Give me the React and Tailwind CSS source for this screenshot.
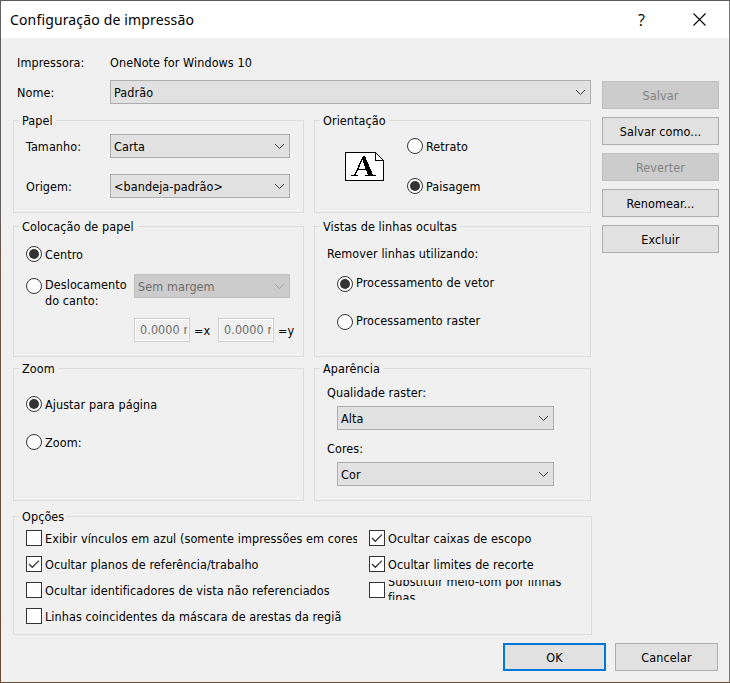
import React from "react";

function Group({ title, className = "", children }) {
  return (
    <section className={"border border-[#dcdcdc] " + className}>
      <div className="flex h-0 items-center pl-[5px]">
        <span className="bg-[#f0f0f0] px-[3px] leading-4">{title}</span>
      </div>
      {children}
    </section>
  );
}

function Select({ value, disabled, className = "" }) {
  return (
    <div
      className={
        "flex h-6 shrink-0 items-center justify-between border pl-[3px] pr-1 " +
        (disabled ? "border-[#bfbfbf] bg-[#cccccc] text-[#6d6d6d] " : "border-[#adadad] bg-[#e1e1e1] ") +
        className
      }
    >
      <span className="pt-px">{value}</span>
      <svg width="11" height="7" viewBox="0 0 11 7" fill="none" stroke={disabled ? "#a3a3a3" : "#404040"} strokeWidth="1">
        <path d="M1 1L5.5 5.5L10 1" />
      </svg>
    </div>
  );
}

function Radio({ checked }) {
  return (
    <svg className="shrink-0" width="16" height="16" viewBox="0 0 16 16">
      <circle cx="8" cy="8" r="7.5" fill="#fff" stroke="#333" strokeWidth="1" />
      {checked && <circle cx="8" cy="8" r="5" fill="#333" />}
    </svg>
  );
}

function Check({ checked }) {
  return (
    <svg className="shrink-0" width="16" height="16" viewBox="0 0 16 16">
      <rect x="0.5" y="0.5" width="15" height="15" fill="#fff" stroke="#333" />
      {checked && <path d="M3 8L6.3 11.3L13 4.6" fill="none" stroke="#333" strokeWidth="1.3" />}
    </svg>
  );
}

function Option({ control, label, className = "", labelClass = "mt-px" }) {
  return (
    <div className={"flex h-4 items-start gap-[3px] " + className}>
      {control}
      <span className={labelClass}>{label}</span>
    </div>
  );
}

function Button({ label, disabled, className = "" }) {
  return (
    <button
      className={
        "flex h-7 items-center justify-center pt-px " +
        (disabled ? "border border-[#bfbfbf] bg-[#cccccc] text-[#838383] " : "bg-[#e1e1e1] ") +
        className
      }
    >
      {label}
    </button>
  );
}

function Offset({ value }) {
  return (
    <span className="flex h-6 w-14 items-center border border-[#cccccc] bg-[#f0f0f0] pl-[5px] text-[#6d6d6d] shadow-[inset_0_0_0_1px_#fff]">
      <span className="w-[47px] overflow-hidden">{value}</span>
    </span>
  );
}

export default function App() {
  return (
    <div className="h-[683px] w-[730px] bg-[linear-gradient(to_bottom,#636063_0,#636063_200px,#6b5547_260px,#6b4a36_683px)] pb-px pl-px">
      <div className="flex h-[682px] w-[729px] flex-col overflow-hidden whitespace-nowrap border-r border-t border-r-[#777777] border-t-[#5b575a] bg-[#f0f0f0] font-['DejaVu_Sans_Condensed','DejaVu_Sans',sans-serif] text-[12.5px] leading-4 tracking-[0.08px] text-black [font-stretch:condensed]">
        <header className="flex h-[37px] shrink-0 items-center bg-white pl-[9px] pr-[23px]">
          <h1 className="flex-1 font-['Noto_Sans',sans-serif] text-[14px] tracking-[0.15px] [font-stretch:normal]">Configuração de impressão</h1>
          <span className="mr-[48px] font-['Open_Sans',sans-serif] text-[16px] [font-stretch:normal]">?</span>
          <svg width="13" height="13" viewBox="0 0 13 13" stroke="#000" strokeWidth="1.1">
            <path d="M0.5 0.5L12.5 12.5M12.5 0.5L0.5 12.5" />
          </svg>
        </header>

        <main className="flex h-[597px] shrink-0 pl-3">
          <div className="flex w-[579px] flex-col">
            <div className="mt-[17px] flex h-4 items-center pl-1">
              <span className="w-[93px]">Impressora:</span>
              <span>OneNote for Windows 10</span>
            </div>
            <div className="mt-[9px] flex h-6 items-center pl-1">
              <span className="w-[93px] pt-px">Nome:</span>
              <Select value="Padrão" className="w-[481px]" />
            </div>

            <div className="mt-4 flex gap-[10px]">
              <Group title="Papel" className="h-[93px] w-[291px]">
                <div className="mt-[13px] flex h-6 items-center pl-3">
                  <span className="w-[84px] pt-px">Tamanho:</span>
                  <Select value="Carta" className="w-[180px]" />
                </div>
                <div className="mt-4 flex h-6 items-center pl-3">
                  <span className="w-[84px] pt-px">Origem:</span>
                  <Select value="<bandeja-padrão>" className="w-[180px]" />
                </div>
              </Group>
              <Group title="Orientação" className="h-[93px] w-[277px]">
                <div className="flex pl-[30px]">
                  <svg className="mt-[31px]" width="39" height="29" viewBox="0 0 39 29" shapeRendering="crispEdges">
                    <path d="M.5.5H30.5L38.5 8.5V28.5H.5Z" fill="#fff" stroke="#000" />
                    <path d="M30.5 .5V8.5H38.5" fill="none" stroke="#000" />
                    <path
                      d="M18 4H20L28 23H31V24H20V23H23L21 18H13L10.500 23H13V24H6V23H9ZM17.500 8L13.500 17H20.500Z"
                      fill="#000"
                      fillRule="evenodd"
                    />
                  </svg>
                  <div className="ml-[23px] mt-[17px] flex flex-col gap-6">
                    <Option control={<Radio />} label="Retrato" />
                    <Option control={<Radio checked />} label="Paisagem" />
                  </div>
                </div>
              </Group>
            </div>

            <div className="mt-[13px] flex gap-[10px]">
              <Group title="Colocação de papel" className="h-[131px] w-[291px]">
                <Option className="mt-[19px] pl-3" control={<Radio checked />} label="Centro" />
                <div className="mt-3 flex h-6 items-center pl-3">
                  <Radio />
                  <span className="ml-[3px] mt-[14px] w-[89px] leading-4">
                    Deslocamento
                    <br />
                    do canto:
                  </span>
                  <Select value="Sem margem" disabled className="w-[156px]" />
                </div>
                <div className="mt-5 flex h-6 items-center pl-[120px]">
                  <Offset value="0.0000 m" />
                  <span className="w-7 pl-1 pt-px">=x</span>
                  <Offset value="0.0000 m" />
                  <span className="pl-1 pt-px">=y</span>
                </div>
              </Group>
              <Group title="Vistas de linhas ocultas" className="h-[131px] w-[277px]">
                <div className="mt-[19px] h-4 pl-3">Remover linhas utilizando:</div>
                <Option className="mt-[14px] pl-[22px]" labelClass="-mt-px" control={<Radio checked />} label="Processamento de vetor" />
                <Option className="mt-[22px] pl-[22px]" labelClass="-mt-px" control={<Radio />} label="Processamento raster" />
              </Group>
            </div>

            <div className="mt-[11px] flex gap-[10px]">
              <Group title="Zoom" className="h-[133px] w-[291px]">
                <Option className="mt-[27px] pl-3" control={<Radio checked />} label="Ajustar para página" />
                <Option className="mt-[22px] pl-3" control={<Radio />} label="Zoom:" />
              </Group>
              <Group title="Aparência" className="h-[133px] w-[277px]">
                <div className="mt-4 h-4 pl-3">Qualidade raster:</div>
                <Select value="Alta" className="ml-[22px] mt-[5px] w-[217px]" />
                <div className="mt-[11px] h-4 pl-3">Cores:</div>
                <Select value="Cor" className="ml-[22px] mt-[5px] w-[217px]" />
              </Group>
            </div>

            <Group title="Opções" className="mt-[15px] h-[119px] w-[579px]">
              <div className="mt-[13px] flex pl-3">
                <div className="flex w-[343px] flex-col gap-[10px]">
                  <Option control={<Check />} labelClass="mt-px w-[312px] overflow-hidden" label="Exibir vínculos em azul (somente impressões em cores)" />
                  <Option control={<Check checked />} label="Ocultar planos de referência/trabalho" />
                  <Option control={<Check />} label="Ocultar identificadores de vista não referenciados" />
                  <Option control={<Check />} label="Linhas coincidentes da máscara de arestas da regiã" />
                </div>
                <div className="flex flex-col gap-[10px]">
                  <Option control={<Check checked />} label="Ocultar caixas de escopo" />
                  <Option control={<Check checked />} label="Ocultar limites de recorte" />
                  <Option
                    control={<Check />}
                    labelClass="-mt-[2px] flex h-5 items-center overflow-hidden"
                    label={
                      <span>
                        Substituir meio-tom por linhas
                        <br />
                        finas
                      </span>
                    }
                  />
                </div>
              </div>
            </Group>
          </div>

          <div className="ml-[10px] mt-[43px] flex w-[117px] flex-col gap-2">
            <Button label="Salvar" disabled />
            <Button label="Salvar como..." className="border border-[#adadad]" />
            <Button label="Reverter" disabled />
            <Button label="Renomear..." className="border border-[#adadad]" />
            <Button label="Excluir" className="border border-[#adadad]" />
          </div>
        </main>

        <footer className="mt-2 flex justify-end gap-[9px] pr-[11px]">
          <Button label="OK" className="w-[103px] border-2 border-[#0078d7]" />
          <Button label="Cancelar" className="w-[103px] border border-[#adadad]" />
        </footer>
      </div>
    </div>
  );
}
